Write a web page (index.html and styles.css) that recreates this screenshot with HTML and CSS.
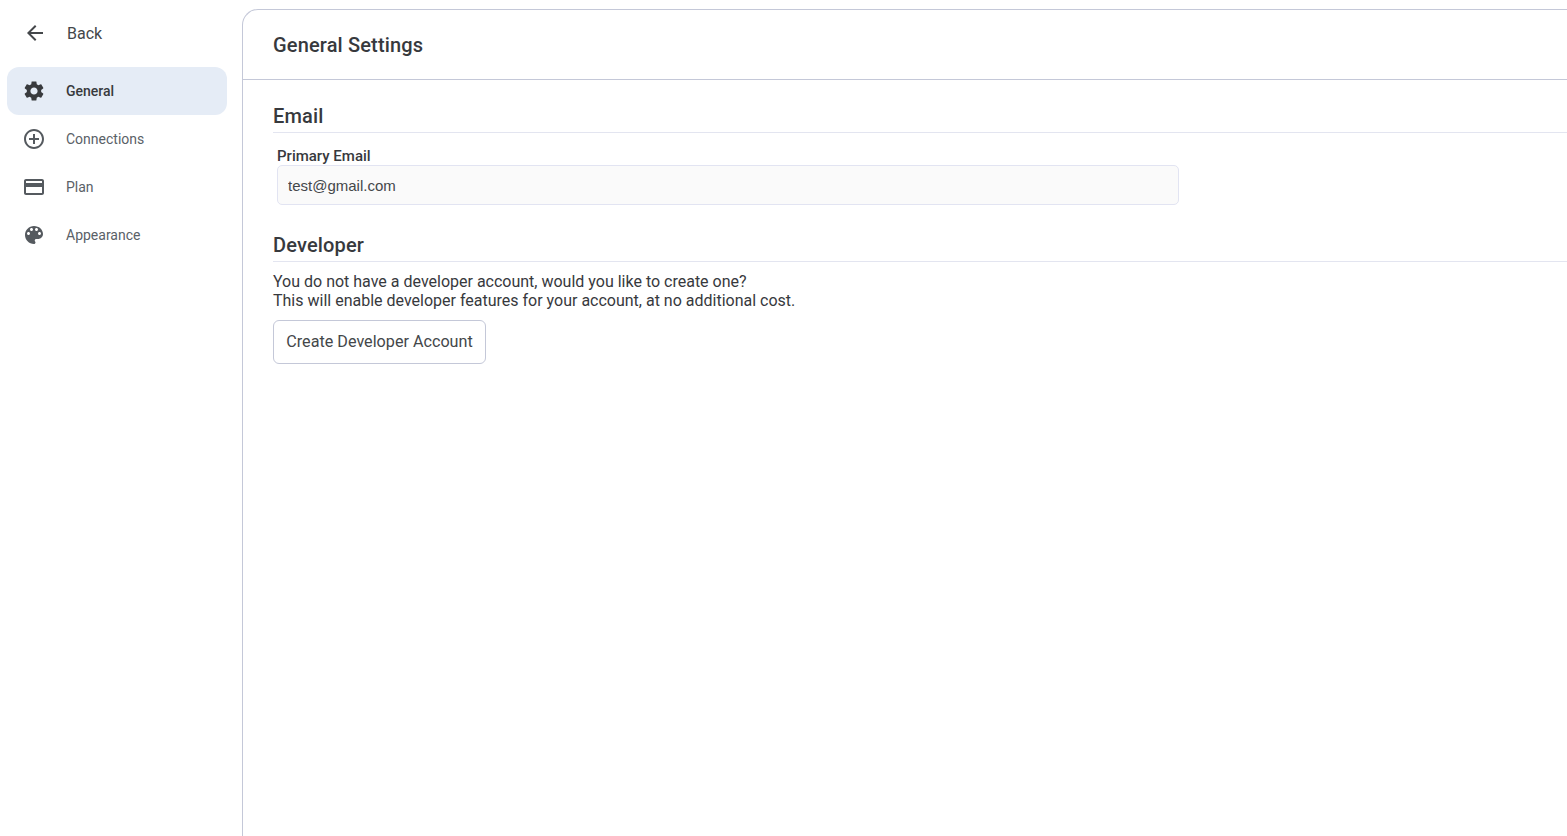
FILE: index.html
```html
<!DOCTYPE html>
<html lang="en">
<head>
<meta charset="utf-8">
<title>General Settings</title>
<link rel="stylesheet" href="styles.css">
</head>
<body>
<div class="app">
  <aside class="sidebar">
    <a class="back">
      <svg class="icon" viewBox="0 0 24 24"><path d="M20 11H7.83l5.59-5.59L12 4l-8 8 8 8 1.41-1.41L7.83 13H20v-2z"/></svg>
      <span>Back</span>
    </a>
    <nav class="nav">
      <a class="nav-item active">
        <svg class="icon" viewBox="0 0 24 24"><path d="M19.14 12.94c.04-.3.06-.61.06-.94 0-.32-.02-.64-.07-.94l2.03-1.58c.18-.14.23-.41.12-.61l-1.92-3.32c-.12-.22-.37-.29-.59-.22l-2.39.96c-.5-.38-1.03-.7-1.62-.94l-.36-2.54c-.04-.24-.24-.41-.48-.41h-3.84c-.24 0-.43.17-.47.41l-.36 2.54c-.59.24-1.13.57-1.62.94l-2.39-.96c-.22-.08-.47 0-.59.22L2.74 8.87c-.12.21-.08.47.12.61l2.03 1.58c-.05.3-.09.63-.09.94s.02.64.07.94l-2.03 1.58c-.18.14-.23.41-.12.61l1.92 3.32c.12.22.37.29.59.22l2.39-.96c.5.38 1.03.7 1.62.94l.36 2.54c.05.24.24.41.48.41h3.84c.24 0 .44-.17.47-.41l.36-2.54c.59-.24 1.13-.56 1.62-.94l2.39.96c.22.08.47 0 .59-.22l1.92-3.32c.12-.22.07-.47-.12-.61l-2.01-1.58zM12 15.6c-1.98 0-3.6-1.62-3.6-3.6s1.62-3.6 3.6-3.6 3.6 1.62 3.6 3.6-1.62 3.6-3.6 3.6z"/></svg>
        <span>General</span>
      </a>
      <a class="nav-item">
        <svg class="icon" viewBox="0 0 24 24"><path d="M13 7h-2v4H7v2h4v4h2v-4h4v-2h-4V7zm-1-5C6.48 2 2 6.48 2 12s4.48 10 10 10 10-4.48 10-10S17.52 2 12 2zm0 18c-4.41 0-8-3.59-8-8s3.59-8 8-8 8 3.59 8 8-3.59 8-8 8z"/></svg>
        <span>Connections</span>
      </a>
      <a class="nav-item">
        <svg class="icon" viewBox="0 0 24 24"><path d="M20 4H4c-1.11 0-1.99.89-1.99 2L2 18c0 1.11.89 2 2 2h16c1.11 0 2-.89 2-2V6c0-1.11-.89-2-2-2zm0 14H4v-6h16v6zm0-10H4V6h16v2z"/></svg>
        <span>Plan</span>
      </a>
      <a class="nav-item">
        <svg class="icon" viewBox="0 0 24 24"><path d="M12 3c-4.97 0-9 4.03-9 9s4.03 9 9 9c.83 0 1.5-.67 1.5-1.5 0-.39-.15-.74-.39-1.01-.23-.26-.38-.61-.38-.99 0-.83.67-1.5 1.5-1.5H16c2.76 0 5-2.24 5-5 0-4.42-4.03-8-9-8zm-5.5 9c-.83 0-1.5-.67-1.5-1.5S5.67 9 6.5 9 8 9.67 8 10.5 7.33 12 6.5 12zm3-4C8.67 8 8 7.33 8 6.5S8.67 5 9.5 5s1.5.67 1.5 1.5S10.33 8 9.5 8zm5 0c-.83 0-1.5-.67-1.5-1.5S13.67 5 14.5 5s1.5.67 1.5 1.5S15.33 8 14.5 8zm3 4c-.83 0-1.5-.67-1.5-1.5S16.67 9 17.5 9s1.5.67 1.5 1.5-.67 1.5-1.5 1.5z"/></svg>
        <span>Appearance</span>
      </a>
    </nav>
  </aside>
  <main class="panel">
    <header class="panel-header"><h1>General Settings</h1></header>
    <div class="panel-body">
      <section class="section">
        <h2>Email</h2>
        <label class="field-label" for="email">Primary Email</label>
        <input class="field-input" id="email" type="text" value="test@gmail.com" readonly>
      </section>
      <section class="section dev">
        <h2>Developer</h2>
        <p class="copy">You do not have a developer account, would you like to create one?<br>This will enable developer features for your account, at no additional cost.</p>
        <button class="btn" type="button">Create Developer Account</button>
      </section>
    </div>
  </main>
</div>
</body>
</html>
```
FILE: styles.css
```css
* { box-sizing: border-box; }
html, body { height: 100%; }
body {
  margin: 0;
  background: #fff;
  color: #37393d;
  font-family: Roboto, "Liberation Sans", sans-serif;
  overflow: hidden;
}
.app { display: flex; height: 836px; }
.sidebar {
  width: 242px;
  flex: none;
  padding: 9px 15px 0 7px;
}
.back {
  display: flex;
  align-items: center;
  height: 48px;
  padding-left: 16px;
  gap: 20px;
  font-size: 16px;
  color: #44474a;
}
.icon { width: 24px; height: 24px; flex: none; fill: currentColor; }
.nav { margin-top: 10px; display: flex; flex-direction: column; }
.nav-item {
  display: flex;
  align-items: center;
  gap: 20px;
  height: 48px;
  padding-left: 15px;
  border-radius: 12px;
  font-size: 14px;
  color: #5a6167;
}
.nav-item .icon { color: #555a5f; }
.nav-item.active {
  background: #e5ecf6;
  color: #383a3d;
  font-weight: 500;
}
.nav-item.active .icon { color: #383a3d; }
.panel {
  flex: 1;
  min-width: 0;
  margin-top: 9px;
  border-left: 1px solid #c4c8d8;
  border-top: 1px solid #c4c8d8;
  border-top-left-radius: 16px;
}
.panel-header {
  height: 70px;
  display: flex;
  align-items: center;
  padding-left: 30px;
  border-bottom: 1px solid #c4c8d8;
}
h1 { margin: 0; font-size: 20px; font-weight: 500; letter-spacing: 0.15px; color: #37393d; }
.panel-body { padding: 21px 0 0 30px; }
h2 {
  margin: 0;
  font-size: 20px;
  line-height: 30px;
  font-weight: 500;
  letter-spacing: 0.15px;
  color: #37393d;
  border-bottom: 1px solid #e3e5f0;
  height: 32px;
}
.field-label {
  display: block;
  margin: 14px 0 0 4px;
  font-size: 15px;
  line-height: 18px;
  font-weight: 500;
  color: #37393d;
}
.field-input {
  display: block;
  margin: 0 0 0 4px;
  width: 902px;
  height: 40px;
  padding: 0 10px;
  background: #fafafa;
  border: 1px solid #e2e4f2;
  border-radius: 5px;
  font-family: "Liberation Sans", Arial, sans-serif;
  font-size: 15px;
  color: #44474a;
  outline: none;
}
.dev { margin-top: 25px; }
.copy {
  margin: 10px 0 0;
  font-size: 16px;
  line-height: 19px;
  color: #37393d;
}
.btn {
  display: block;
  margin-top: 10px;
  width: 213px;
  height: 44px;
  padding: 0 0 2px;
  background: #fff;
  border: 1px solid #c4c8d8;
  border-radius: 6px;
  font-family: Roboto, sans-serif;
  font-size: 16.17px;
  color: #44474a;
}
```
